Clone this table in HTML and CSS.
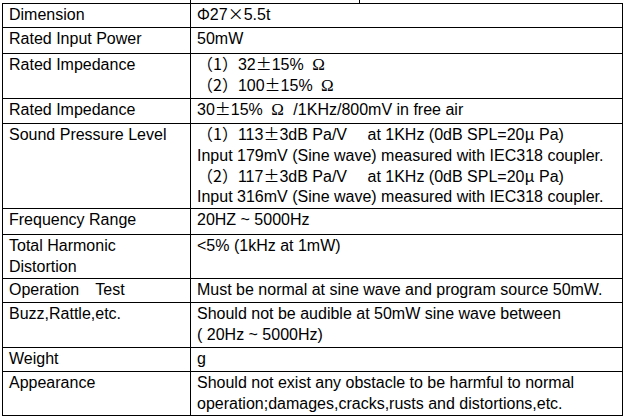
FILE: index.html
```html
<!DOCTYPE html>
<html>
<head>
<meta charset="utf-8">
<link rel="stylesheet" href="styles.css">
</head>
<body>
<div class="stub"><div class="s1"></div><div class="s2"></div></div>
<div class="spec">
  <div class="c r24">Dimension</div>
  <div class="c r24"><span class="cj">Φ</span>27<span class="cj">×</span>5.5t</div>

  <div class="c r26">Rated Input Power</div>
  <div class="c r26">50mW</div>

  <div class="c r45">Rated Impedance</div>
  <div class="c r45"><span class="cj">（1）</span>32<span class="cj">±</span>15% <span class="om">Ω</span><br><span class="cj">（2）</span>100<span class="cj">±</span>15% <span class="om">Ω</span></div>

  <div class="c r25">Rated Impedance</div>
  <div class="c r25">30<span class="cj">±</span>15% <span class="om">Ω</span> /1KHz/800mV in free air</div>

  <div class="c r85">Sound Pressure Level</div>
  <div class="c r85"><span class="cj">（1）</span>113<span class="cj">±</span>3dB Pa/V<span class="cj">　</span> at 1KHz (0dB SPL=20<span class="cj">μ</span> Pa)<br>Input 179mV (Sine wave) measured with IEC318 coupler.<br><span class="cj">（2）</span>117<span class="cj">±</span>3dB Pa/V<span class="cj">　</span> at 1KHz (0dB SPL=20<span class="cj">μ</span> Pa)<br>Input 316mV (Sine wave) measured with IEC318 coupler.</div>

  <div class="c r26">Frequency Range</div>
  <div class="c r26">20HZ ~ 5000Hz</div>

  <div class="c r44">Total Harmonic<br>Distortion</div>
  <div class="c r44">&lt;5% (1kHz at 1mW)</div>

  <div class="c r24">Operation<span class="cj">　</span>Test</div>
  <div class="c r24">Must be normal at sine wave and program source 50mW.</div>

  <div class="c r45">Buzz,Rattle,etc.</div>
  <div class="c r45">Should not be audible at 50mW sine wave between<br>( 20Hz ~ 5000Hz)</div>

  <div class="c r24">Weight</div>
  <div class="c r24">g</div>

  <div class="c r44">Appearance</div>
  <div class="c r44">Should not exist any obstacle to be harmful to normal<br>operation;damages,cracks,rusts and distortions,etc.</div>
</div>
</body>
</html>
```

FILE: styles.css
```css
html, body {
  margin: 0;
  padding: 0;
  background: #fff;
}
body {
  font-family: "Liberation Sans", Arial, sans-serif;
  font-size: 16px;
  color: #000;
}
.stub {
  display: flex;
  height: 3px;
  margin-left: 2px;
}
.stub .s1 {
  width: 189px;
  box-sizing: border-box;
  border-right: 1px solid #000;
}
.stub .s2 {
  width: 169px;
  box-sizing: border-box;
  border-right: 1px solid #000;
}
.spec {
  display: grid;
  grid-template-columns: 188px 432px;
  width: max-content;
  margin-left: 2px;
  border-top: 1px solid #000;
  border-left: 1px solid #000;
}
.c {
  box-sizing: border-box;
  border-right: 1px solid #000;
  border-bottom: 1px solid #000;
  padding: 1px 0 0 6px;
  line-height: 20.75px;
  white-space: nowrap;
}
.r24 { height: 24px; }
.r25 { height: 25px; }
.r26 { height: 26px; }
.r44 { height: 44px; }
.r45 { height: 45px; }
.r85 { height: 85px; }
.cj {
  font-family: "Noto Sans CJK SC", sans-serif;
  line-height: 1;
}
.om {
  font-family: "Liberation Serif", serif;
  font-size: 17px;
  line-height: 1;
  margin: 0 5px 0 4px;
}
```
